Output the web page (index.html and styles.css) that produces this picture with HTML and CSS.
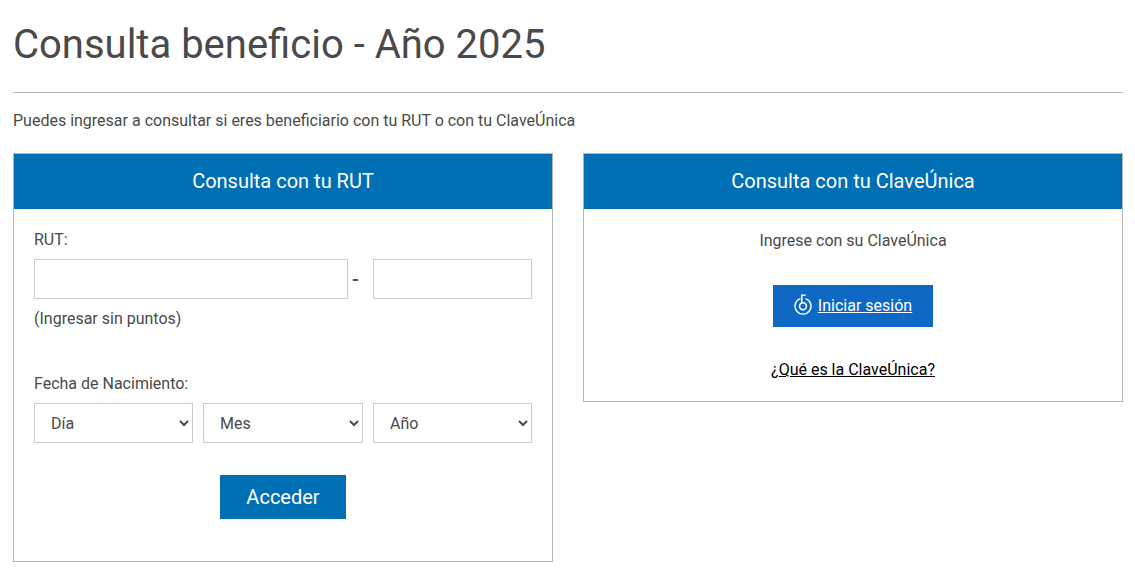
FILE: index.html
```html
<!DOCTYPE html>
<html lang="es">
<head>
<meta charset="utf-8">
<title>Consulta beneficio</title>
<link rel="stylesheet" href="styles.css">
</head>
<body>
<main class="page">
  <h1 class="title">Consulta beneficio - Año 2025</h1>
  <hr class="rule">
  <p class="intro">Puedes ingresar a consultar si eres beneficiario con tu RUT o con tu ClaveÚnica</p>
  <div class="columns">
    <section class="card">
      <h2 class="card-head">Consulta con tu RUT</h2>
      <form class="card-body rut-form">
        <label class="label">RUT:</label>
        <div class="rut-row">
          <input class="field rut-main" type="text">
          <span class="dash">-</span>
          <input class="field rut-dv" type="text">
        </div>
        <p class="hint">(Ingresar sin puntos)</p>
        <label class="label birth-label">Fecha de Nacimiento:</label>
        <div class="date-row">
          <select class="field select"><option>Día</option></select>
          <select class="field select"><option>Mes</option></select>
          <select class="field select"><option>Año</option></select>
        </div>
        <div class="submit-row"><button class="submit" type="button">Acceder</button></div>
      </form>
    </section>
    <section class="card card-short">
      <h2 class="card-head">Consulta con tu ClaveÚnica</h2>
      <div class="card-body clave">
        <p class="clave-text">Ingrese con su ClaveÚnica</p>
        <a class="login" href="#">
          <svg class="login-icon" viewBox="0 0 18 22" width="18" height="22" aria-hidden="true">
            <path d="M6.4 4.6A8 8 0 1 0 11.6 4.6" fill="none" stroke="#fff" stroke-width="1.4"/>
            <circle cx="9" cy="12.2" r="3.4" fill="none" stroke="#fff" stroke-width="1.6"/>
            <path d="M7.8 9V1.2H11.6" fill="none" stroke="#fff" stroke-width="1.5"/>
          </svg>
          <span class="login-text">Iniciar sesión</span>
        </a>
        <a class="what" href="#">¿Qué es la ClaveÚnica?</a>
      </div>
    </section>
  </div>
</main>
</body>
</html>
```
FILE: styles.css
```css
* { box-sizing: border-box; }
html, body { margin: 0; padding: 0; background: #fff; }
body { font-family: Roboto, "Liberation Sans", sans-serif; color: #4a4a4a; font-size: 16px; overflow: hidden; }
.page { padding: 0 12px 0 13px; }
.title { margin: 0; padding-top: 21px; font-size: 40px; line-height: 48px; font-weight: 400; color: #4a4a4a; }
.rule { margin: 23px 0 0; border: 0; border-top: 1px solid #b4b4b4; height: 0; }
.intro { margin: 17px 0 0; font-size: 16px; line-height: 22px; }
.columns { display: flex; gap: 30px; align-items: flex-start; margin-top: 21px; }
.card { flex: 1 1 0; border: 1px solid #b4b4b4; height: 409px; }
.card-short { height: 249px; }
.card-head { margin: 0; background: #006fb3; color: #fff; font-size: 20px; font-weight: 400; line-height: 55px; height: 55px; text-align: center; }
.card-body { padding: 20px; }
.label { display: block; line-height: 22px; }
.rut-row { display: flex; align-items: center; margin-top: 8px; }
.field { border: 1px solid #ccc; background: #fff; height: 40px; font-family: inherit; font-size: 16px; color: #4a4a4a; border-radius: 0; }
.rut-main { width: 314px; }
.dash { width: 25px; padding-left: 4px; font-size: 20px; font-weight: 500; }
.rut-dv { width: 159px; }
.hint { margin: 9px 0 0; line-height: 22px; }
.birth-label { margin-top: 43px; }
.date-row { display: grid; grid-template-columns: 159px 160px 159px; gap: 10px; margin-top: 8px; }
.select { width: 100%; padding: 0 8px 0 12px; }
.submit-row { display: flex; justify-content: center; margin-top: 32px; }
.submit { width: 126px; height: 44px; border: 0; background: #006fb3; color: #fff; font-family: inherit; font-size: 20px; padding: 0; }
.clave { display: flex; flex-direction: column; align-items: center; padding-top: 21px; }
.clave-text { margin: 0; line-height: 22px; }
.login { display: flex; align-items: center; justify-content: center; gap: 6px; width: 160px; height: 42px; margin-top: 33px; padding-bottom: 2px; background: #0f69c4; color: #fff; }
.login-icon { flex: none; }
.login-text { text-decoration: underline; }
.what { margin-top: 32px; color: #000; line-height: 22px; text-decoration: underline; }
```
